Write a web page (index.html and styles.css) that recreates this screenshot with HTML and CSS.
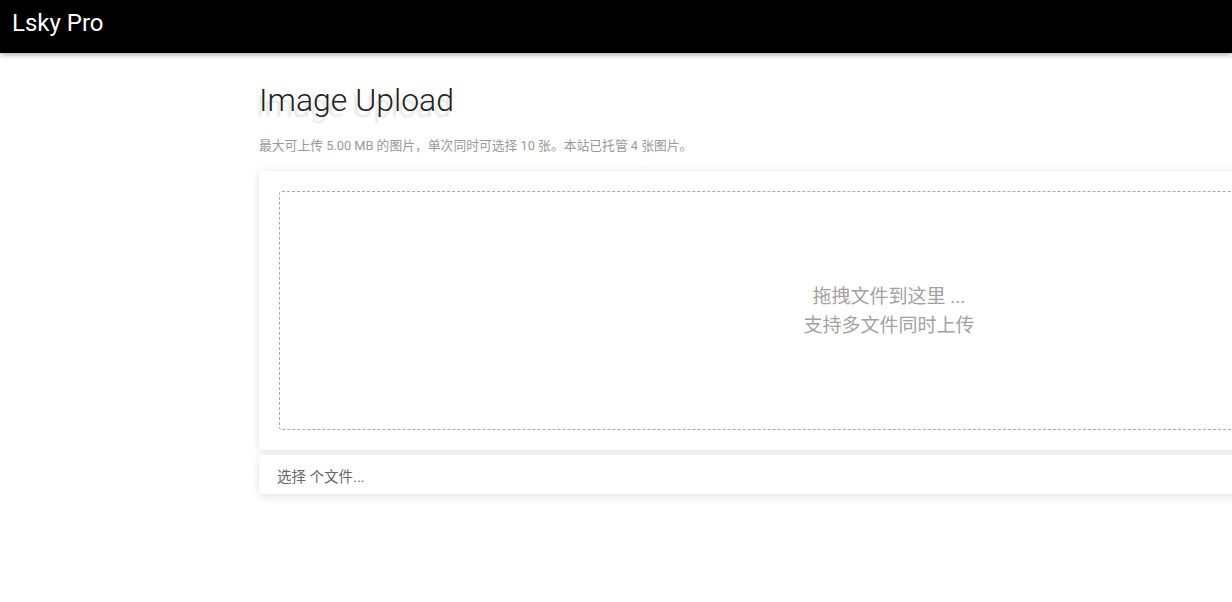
FILE: index.html
```html
<!DOCTYPE html>
<html lang="zh-CN">
<head>
<meta charset="utf-8">
<title>Lsky Pro</title>
<link rel="stylesheet" href="styles.css">
</head>
<body>
<header class="topbar">
  <div class="brand">Lsky Pro</div>
</header>
<main class="main">
  <h1 class="title">Image Upload</h1>
  <p class="subtitle">最大可上传 5.00 MB 的图片，单次同时可选择 10 张。本站已托管 4 张图片。</p>
  <section class="card drop-card">
    <div class="dropzone">
      <div class="drop-text">拖拽文件到这里 ...<br>支持多文件同时上传</div>
    </div>
  </section>
  <section class="card file-card">
    <span class="file-label">选择 个文件...</span>
  </section>
</main>
</body>
</html>
```
FILE: styles.css
```css
html {
  overflow: hidden;
}
body {
  margin: 0;
  padding: 0;
  background: #fff;
  font-family: Roboto, "Noto Sans CJK SC", sans-serif;
}
.topbar {
  height: 53px;
  background: #000;
  display: flex;
  align-items: center;
  padding-left: 12px;
  box-shadow: 0 2px 5px rgba(0,0,0,0.3);
  position: relative;
  z-index: 2;
}
.brand {
  color: #fff;
  font-size: 24px;
  font-weight: 400;
  margin-top: -8px;
}
.main {
  padding: 0 0 40px 259px;
  width: 1260px;
}
.title {
  margin: 27px 0 0 0;
  font-size: 32px;
  font-weight: 300;
  color: #222;
  line-height: 40px;
  text-shadow: -3px 6px 2px rgba(0,0,0,0.12);
}
.subtitle {
  margin: 18px 0 0 0;
  font-size: 12.8px;
  color: #999;
  line-height: 16px;
}
.card {
  background: #fff;
  border-radius: 4px;
  box-shadow: 0 1px 8px rgba(0,0,0,0.12);
}
.drop-card {
  margin-top: 17px;
  padding: 20px;
}
.dropzone {
  height: 237px;
  border: 1px dashed #aaa;
  border-radius: 3px;
  display: flex;
  align-items: center;
  justify-content: center;
}
.drop-text {
  text-align: center;
  font-size: 19px;
  line-height: 29px;
  color: #a2a2a2;
}
.file-card {
  margin-top: 5px;
  height: 39px;
  display: flex;
  align-items: center;
  padding-left: 18px;
  box-shadow: 0 2px 10px rgba(0,0,0,0.12);
}
.file-label {
  font-size: 14.5px;
  color: #666;
  margin-top: 2px;
}
```
